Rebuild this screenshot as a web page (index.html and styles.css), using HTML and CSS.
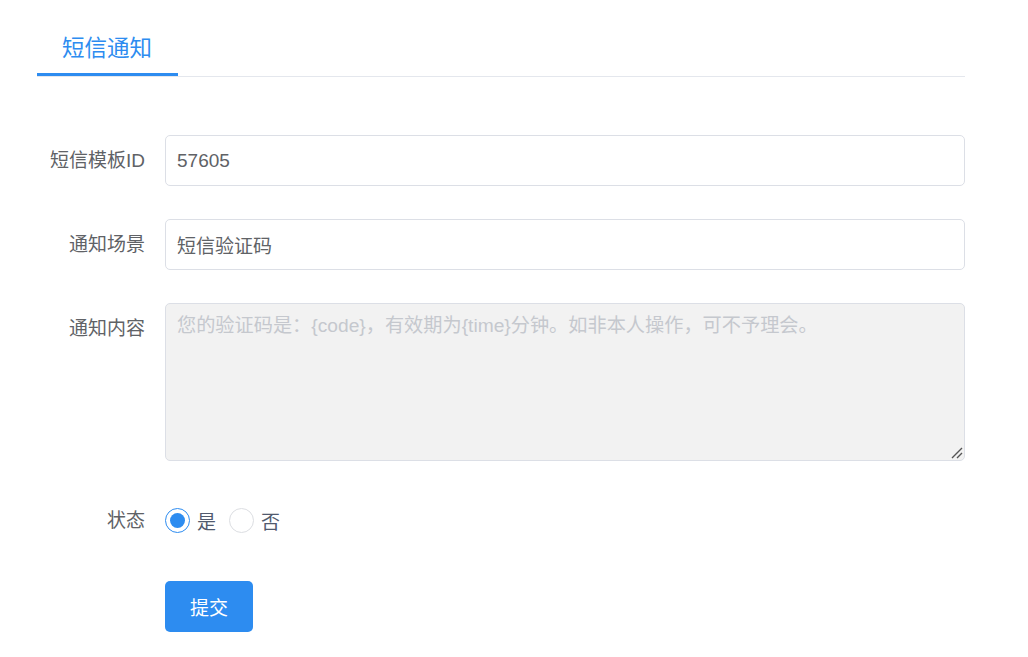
FILE: index.html
```html
<!DOCTYPE html>
<html lang="zh">
<head>
<meta charset="utf-8">
<title>短信通知</title>
<link rel="stylesheet" href="styles.css">
</head>
<body>
<div class="page">
  <div class="tabs">
    <div class="tab active">短信通知</div>
  </div>
  <form class="form">
    <div class="row">
      <label class="label">短信模板ID</label>
      <div class="control"><input class="input" type="text" value="57605"></div>
    </div>
    <div class="row">
      <label class="label">通知场景</label>
      <div class="control"><input class="input" type="text" value="短信验证码"></div>
    </div>
    <div class="row row-text">
      <label class="label">通知内容</label>
      <div class="control textarea-wrap">
        <textarea class="textarea" disabled>您的验证码是：{code}，有效期为{time}分钟。如非本人操作，可不予理会。</textarea>
        <svg class="grip" width="14" height="14" viewBox="0 0 14 14"><path d="M13 3 L3 13 M13 8 L8 13" stroke="#555" stroke-width="1.4" fill="none"/></svg>
      </div>
    </div>
    <div class="row row-radio">
      <label class="label">状态</label>
      <div class="control radios">
        <span class="radio"><span class="circle checked"></span><span class="rtext">是</span></span>
        <span class="radio"><span class="circle"></span><span class="rtext">否</span></span>
      </div>
    </div>
    <div class="row">
      <span class="label"></span>
      <div class="control"><button type="button" class="btn">提交</button></div>
    </div>
  </form>
</div>
</body>
</html>
```
FILE: styles.css
```css
* { box-sizing: border-box; }
html, body { margin: 0; padding: 0; background: #fff; }
body {
  font-family: "Liberation Sans", "Noto Sans CJK SC", sans-serif;
  color: #606266;
}
.page {
  width: 965px;
  padding-left: 37px;
  padding-top: 24px;
}
.tabs {
  display: flex;
  border-bottom: 1px solid #e4e7ed;
}
.tab {
  padding: 0 26px 0 25px;
  font-size: 22.5px;
  line-height: 49px;
  color: #2d8cf0;
  border-bottom: 3px solid #2d8cf0;
}
.form {
  padding-top: 58px;
}
.row {
  display: flex;
  align-items: flex-start;
  margin-bottom: 33px;
}
.row-text {
  margin-bottom: 34px;
}
.row-radio {
  margin-bottom: 35px;
}
.label {
  width: 128px;
  flex: none;
  padding-right: 20px;
  text-align: right;
  font-size: 19px;
  line-height: 51px;
  color: #606266;
}
.control {
  flex: 1;
  min-width: 0;
}
.input {
  display: block;
  width: 100%;
  height: 51px;
  border: 1px solid #dcdfe6;
  border-radius: 5px;
  padding: 0 11px;
  font-family: "Liberation Sans", "Noto Sans CJK SC", sans-serif;
  font-size: 19px;
  color: #606266;
  outline: none;
}
.textarea-wrap {
  position: relative;
}
.textarea {
  display: block;
  width: 100%;
  height: 158px;
  border: 1px solid #dcdfe6;
  border-radius: 5px;
  padding: 8px 11px;
  background: #f2f2f2;
  font-family: "Liberation Sans", "Noto Sans CJK SC", sans-serif;
  font-size: 19.2px;
  line-height: 27px;
  color: #c5c8ce;
  resize: none;
}
.grip {
  position: absolute;
  right: 2px;
  bottom: 2px;
}
.radios {
  display: flex;
  align-items: center;
  height: 50px;
}
.radio {
  display: inline-flex;
  align-items: center;
  margin-right: 13px;
}
.circle {
  width: 25px;
  height: 25px;
  border-radius: 50%;
  border: 1px solid #dcdee2;
  background: #fff;
  display: inline-flex;
  align-items: center;
  justify-content: center;
}
.circle.checked {
  border-color: #2d8cf0;
}
.circle.checked::after {
  content: "";
  width: 15px;
  height: 15px;
  border-radius: 50%;
  background: #2d8cf0;
}
.rtext {
  margin-left: 7px;
  font-size: 19px;
  color: #515a6e;
}
.btn {
  width: 88px;
  height: 51px;
  border: none;
  border-radius: 5px;
  background: #2d8cf0;
  color: #fff;
  font-family: "Liberation Sans", "Noto Sans CJK SC", sans-serif;
  font-size: 19px;
  padding: 0;
}
```
